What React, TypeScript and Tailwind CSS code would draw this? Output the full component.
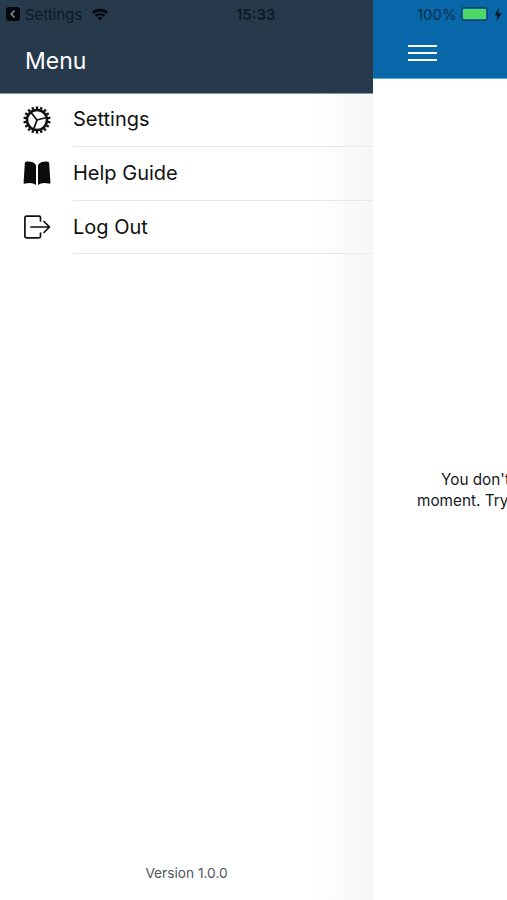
import React from 'react';

const font = { sans: 'font-["Inter","Liberation_Sans",sans-serif]' };

const GearIcon = () => {
  const teeth = Array.from({ length: 18 }, (_, i) => i * 20);
  return (
    <svg width="30" height="30" viewBox="0 0 30 30" fill="none" stroke="#111" aria-hidden="true">
      <circle cx="15" cy="15" r="10" strokeWidth="2.6" />
      {teeth.map((deg) => (
        <line key={deg} x1="15" y1="4" x2="15" y2="1.4" strokeWidth="2.4" transform={`rotate(${deg} 15 15)`} />
      ))}
      <path d="M15 15 L24.5 12.5 M15 15 L9 7.5 M15 15 L11.5 24.5" strokeWidth="1.8" />
    </svg>
  );
};

const BookIcon = () => (
  <svg width="30" height="30" viewBox="0 0 30 30" fill="#0b0b0b" aria-hidden="true">
    <path d="M14 7C12.6 4.6 9 3.4 5 3.6 3.6 3.7 2.9 4.4 2.8 5.6L1.6 24.4C1.5 25.3 2.1 25.8 3 25.6 7.6 24.4 11.4 24.8 14 27Z" />
    <path d="M16 7C17.4 4.6 21 3.4 25 3.6 26.4 3.7 27.1 4.4 27.2 5.6L28.4 24.4C28.5 25.3 27.9 25.8 27 25.6 22.4 24.4 18.6 24.8 16 27Z" />
  </svg>
);

const LogoutIcon = () => (
  <svg width="30" height="30" viewBox="0 0 30 30" fill="none" stroke="#111" strokeWidth="1.7" strokeLinecap="round" strokeLinejoin="round" aria-hidden="true">
    <path d="M18.5 9V5.8C18.5 4.8 17.9 4.2 17 4.2H4.6C3.6 4.2 2.9 4.9 2.9 5.9V24.1C2.9 25.1 3.6 25.8 4.6 25.8H17C17.9 25.8 18.5 25.2 18.5 24.2V21" />
    <path d="M9 15H27.5M22 9.5L27.5 15L22 20.5" />
  </svg>
);

const items = [
  { label: 'Settings', icon: <GearIcon />, row: 'h-[53px]', text: 'pb-[2px]' },
  { label: 'Help Guide', icon: <BookIcon />, row: 'h-[54px]', text: 'pb-[2px]' },
  { label: 'Log Out', icon: <LogoutIcon />, row: 'h-[53px]', text: 'pb-0' },
];

export default function App() {
  return (
    <div className={`flex h-[900px] w-[507px] overflow-hidden bg-white ${font.sans}`}>
      {/* drawer */}
      <div className="flex w-[373px] shrink-0 flex-col bg-gradient-to-r from-white from-[84%] to-[#f6f6f6]">
        <header className="h-[94px] shrink-0 border-b border-[#7f99a8] bg-[#263a4c]">
          <div className="flex h-[28px] items-center pl-[6px] text-[#0e1a25]">
            <span className="flex h-[14px] w-[14px] items-center justify-center rounded-[3px] bg-[#05090d]">
              <svg width="8" height="10" viewBox="0 0 8 10" fill="none" stroke="#7f8a94" strokeWidth="1.6">
                <path d="M5.5 1.5L2.2 5l3.3 3.5" />
              </svg>
            </span>
            <span className="ml-[5px] w-[62px] whitespace-nowrap text-[15px] leading-none">Settings</span>
            <svg className="ml-[4px]" width="18" height="13" viewBox="0 0 18 13" fill="#05090d">
              <path d="M9 12.6L6.6 10a3.4 3.4 0 0 1 4.8 0Z" />
              <path d="M5.5 8.8L3.9 7a7.4 7.4 0 0 1 10.2 0l-1.6 1.8a5 5 0 0 0-7 0Z" />
              <path d="M2.9 6L1 4a11.3 11.3 0 0 1 16 0l-1.9 2a8.7 8.7 0 0 0-12.2 0Z" />
            </svg>
            <span className="ml-[127px] text-[15px] font-semibold leading-none">15:33</span>
          </div>
          <div className="flex h-[60px] items-center pl-[25px] pt-[7px] text-[23px] font-normal text-white">
            <span className="leading-none">Menu</span>
          </div>
        </header>
        <nav>
          {items.map((item) => (
            <div key={item.label} className={`flex items-center pl-[22px] ${item.row}`}>
              <span className="mr-[21px] flex w-[30px] shrink-0 justify-center pb-[2px]">{item.icon}</span>
              <div className={`flex h-full flex-1 items-center border-b border-[#e8e8e8] text-[20px] leading-none text-[#111] ${item.text}`}>
                {item.label}
              </div>
            </div>
          ))}
        </nav>
        <div className="mt-auto pb-[18px] text-center text-[13.7px] leading-[17px] text-[#50575e]">Version 1.0.0</div>
      </div>

      {/* page behind the drawer, cut off by the window edge */}
      <div className="flex w-[507px] shrink-0 flex-col">
        <header className="h-[79px] shrink-0 border-b border-[#5aa5da] bg-[#0867a9]">
          <div className="flex h-[28px] items-center pl-[44px] text-[#0b2d47]">
            <span className="text-[15px] leading-none">100%</span>
            <span className="ml-[4px] flex h-[14px] w-[27px] items-center rounded-[3px] border border-[#0b3f66] p-[1px]">
              <span className="h-full w-full rounded-[1px] bg-[#4fd964]" />
            </span>
            <svg className="ml-[6px]" width="8" height="13" viewBox="0 0 8 13" fill="#05131f">
              <path d="M5 0L0.6 7.2H3.4L2.6 13L7.6 5.2H4.4Z" />
            </svg>
          </div>
          <div className="ml-[35px] mt-[17px] flex w-[29px] flex-col gap-[5px]">
            <span className="h-[2px] bg-white" />
            <span className="h-[2px] bg-white" />
            <span className="h-[2px] bg-white" />
          </div>
        </header>
        <div className="flex flex-1 items-center pb-[2px]">
          <p className="translate-y-[1px] whitespace-nowrap pl-[44px] text-[15.3px] leading-[21px] text-[#16191c]">
            <span className="block pl-[24px]">You don't have any notifications at the</span>
            <span className="block">moment. Try again later</span>
          </p>
        </div>
      </div>
    </div>
  );
}
